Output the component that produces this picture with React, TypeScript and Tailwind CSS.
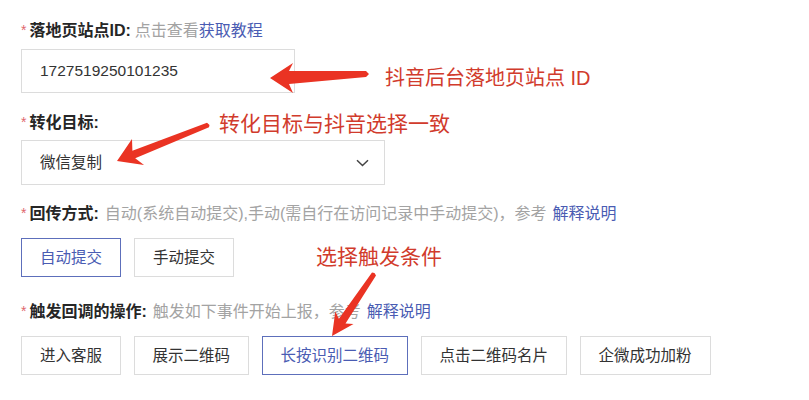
import React from "react"

const font = "font-['Liberation_Sans','Noto_Sans_CJK_SC',sans-serif]"

function Label({ text, children }: { text: string; children?: React.ReactNode }) {
  return (
    <div className="flex h-5 items-center text-[16px] leading-5 whitespace-nowrap">
      <span className="mr-[3px] -mt-[3px] text-[14px] text-[#e0676c]">*</span>
      <span className="font-semibold text-[#262626]">{text}</span>
      {children}
    </div>
  )
}

function Btn({ text, active }: { text: string; active?: boolean }) {
  return (
    <div
      className={
        active
          ? "flex h-[39px] items-center border border-[#5d6fbb] px-[18px] text-[15.5px] text-[#4a5cb3]"
          : "flex h-[39px] items-center border border-[#dcdcdc] px-[18px] text-[15.5px] text-[#333]"
      }
    >
      {text}
    </div>
  )
}

// red arrows drawn over the form
function Arrows() {
  return (
    <svg className="pointer-events-none absolute inset-0" width="809" height="400" viewBox="0 0 809 400">
      <polygon
        fill="#ea3323"
        points="270,78 293,63 289,71 366,71 369,74 366,77 289,84 293,93"
      />
      <polygon
        fill="#ea3323"
        points="117,161 132,139 132.4,150.8 207,122.7 209.5,125 209,127.3 135.2,158.2 144,165"
      />
      <polygon
        fill="#ea3323"
        points="332,336 335.3,311.6 338.9,318.8 372,272.6 374.5,273 376,275.4 345.5,323.4 353.5,324"
      />
    </svg>
  )
}

export default function App() {
  return (
    <div className={`relative h-[400px] w-[809px] overflow-hidden bg-white ${font}`}>
      <div className="flex flex-col pl-[21px] pt-[21px]">
        {/* 落地页站点ID */}
        <Label text="落地页站点ID:">
          <span className="ml-[4px] text-[#a3a3a3]">点击查看</span>
          <span className="text-[#4a5cb3]">获取教程</span>
        </Label>
        <div className="mt-2 flex h-[44px] w-[274px] items-center border border-[#dcdcdc] px-[18px] text-[15.5px] text-[#333]">
          1727519250101235
        </div>

        {/* 转化目标 */}
        <div className="mt-5">
          <Label text="转化目标:" />
        </div>
        <div className="mt-[7px] flex h-[45px] w-[364px] items-center justify-between border border-[#dcdcdc] pl-[18px] pr-[15px] text-[15.5px] text-[#333]">
          <span>微信复制</span>
          <svg width="13" height="8" viewBox="0 0 13 8">
            <path d="M1 1.2 L6.5 6.5 L12 1.2" fill="none" stroke="#444" strokeWidth="1.5" />
          </svg>
        </div>

        {/* 回传方式 */}
        <div className="mt-[19px]">
          <Label text="回传方式:">
            <span className="ml-[6px] text-[#a3a3a3]">自动(系统自动提交),手动(需自行在访问记录中手动提交)，参考</span>
            <span className="ml-[6px] text-[#4a5cb3]">解释说明</span>
          </Label>
        </div>
        <div className="mt-[14px] flex gap-[13px]">
          <Btn text="自动提交" active />
          <Btn text="手动提交" />
        </div>

        {/* 触发回调的操作 */}
        <div className="mt-[25px]">
          <Label text="触发回调的操作:">
            <span className="ml-[6px] text-[#a3a3a3]">触发如下事件开始上报，参考</span>
            <span className="ml-[6px] text-[#4a5cb3]">解释说明</span>
          </Label>
        </div>
        <div className="mt-[14px] flex gap-[12.5px]">
          <Btn text="进入客服" />
          <Btn text="展示二维码" />
          <Btn text="长按识别二维码" active />
          <Btn text="点击二维码名片" />
          <Btn text="企微成功加粉" />
        </div>
      </div>

      <Arrows />

      {/* annotations */}
      <div className="absolute left-[385px] top-[64px] text-[20px] leading-7 text-[#d13b2c]">抖音后台落地页站点 ID</div>
      <div className="absolute left-[219px] top-[110px] text-[21px] leading-7 text-[#d13b2c]">转化目标与抖音选择一致</div>
      <div className="absolute left-[316px] top-[243px] text-[21px] leading-7 text-[#d13b2c]">选择触发条件</div>
    </div>
  )
}
